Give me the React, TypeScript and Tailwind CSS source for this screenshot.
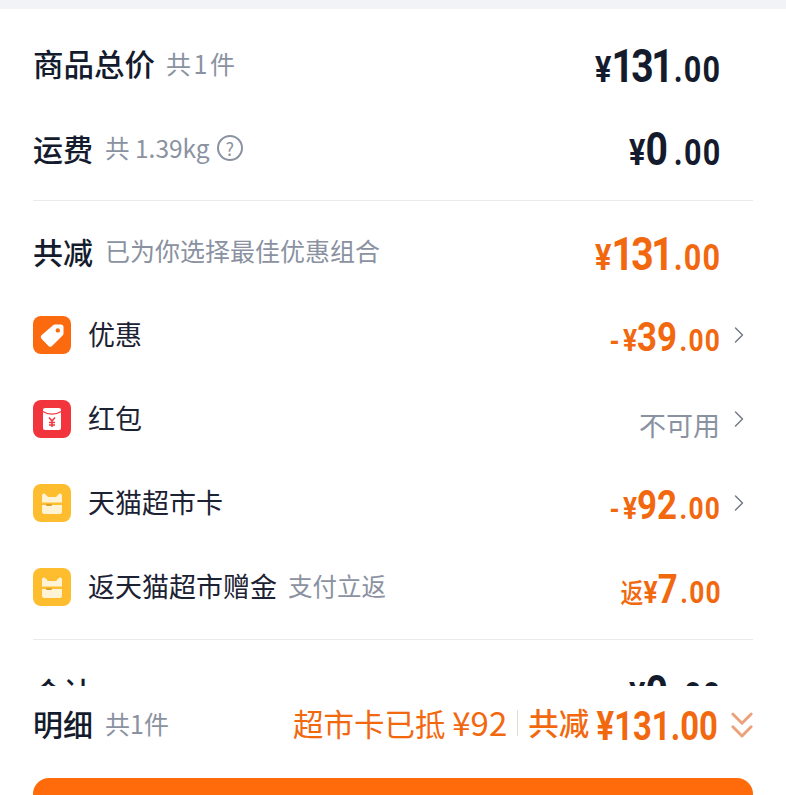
import React from 'react';
import { ChevronRight, ChevronsDown } from 'lucide-react';

const cjk = 'font-["Noto_Sans_CJK_SC","Noto_Sans",sans-serif]';
const num = 'font-["Roboto",sans-serif]';

function Money({ prefix, value, cents = '.00', big = 'text-[46px]', small = 'text-[36px]', color = 'text-[#141b2d]', tight = '' }: {
  prefix?: React.ReactNode;
  value: string;
  cents?: string;
  big?: string;
  small?: string;
  color?: string;
  tight?: string;
}) {
  return (
    <div className={`flex origin-right scale-x-[0.85] items-baseline font-bold leading-none ${num} ${color}`}>
      {prefix}
      <span className={small}>¥</span>
      <span className={`${big} ${tight}`}>{value}</span>
      <span className={`${small} ml-[3px] -mr-[2px] tracking-[1.500px]`}>{cents}</span>
    </div>
  );
}

function TagIcon() {
  return (
    <div className="flex h-[38px] w-[38px] items-center justify-center rounded-lg bg-[#fb6a0e]">
      <svg viewBox="0 0 38 38" className="h-[38px] w-[38px]">
        <path fill="#fff" fillRule="evenodd" d="M22 8.500h6a2.500 2.500 0 0 1 2.500 2.500v6.500a3 3 0 0 1-.9 2.100L19 30a2.500 2.500 0 0 1-3.500 0l-7-7.200a2.500 2.500 0 0 1 0-3.500L19.800 9.400A3 3 0 0 1 22 8.500Zm2.800 3.700a2.200 2.200 0 1 0 0 4.400 2.200 2.200 0 0 0 0-4.400Z" />
      </svg>
    </div>
  );
}

function PacketIcon() {
  return (
    <div className="flex h-[38px] w-[38px] items-center justify-center rounded-lg bg-[#f2353c]">
      <svg viewBox="0 0 38 38" className="h-[38px] w-[38px]">
        <rect x="10" y="8" width="18" height="22" rx="2" fill="#fff" />
        <path d="M10 11.500c5 3.500 13 3.500 18 0" fill="none" stroke="#f2353c" strokeWidth="1.300" />
        <path d="M16 17.500l3 3.500 3-3.500M19 21v6M16 22.500h6M16 25h6" fill="none" stroke="#f2353c" strokeWidth="1.500" />
      </svg>
    </div>
  );
}

function CardIcon() {
  return (
    <div className="flex h-[38px] w-[38px] items-center justify-center rounded-lg bg-[#fdbd2f]">
      <svg viewBox="0 0 38 38" className="h-[38px] w-[38px]">
        <path fill="#fff3d6" d="M9 11.500c0-2 2-2.700 3.200-1.500l2.800 3h8l2.800-3c1.200-1.200 3.200-.5 3.200 1.500V18.500H9Z" />
        <path fill="#fff3d6" d="M9 21h20v6.500a2.500 2.500 0 0 1-2.500 2.500h-15A2.500 2.500 0 0 1 9 27.500Z" />
        <rect x="13" y="20" width="6" height="2" rx="1" fill="#d9a02a" />
      </svg>
    </div>
  );
}

function Row({ icon, label, note, right, arrow }: {
  icon: React.ReactNode;
  label: string;
  note?: string;
  right: React.ReactNode;
  arrow?: boolean;
}) {
  return (
    <div className="flex h-[84px] items-center">
      {icon}
      <span className="ml-[17px] -mt-[1px] text-[27px] text-[#1c2233]">{label}</span>
      {note && <span className="ml-[11px] -mt-[1px] text-[24.500px] text-[#8a92a1]">{note}</span>}
      <div className="ml-auto flex items-center">
        <div className="mt-1">{right}</div>
        <div className="flex w-[33px] justify-end">
          {arrow && <ChevronRight className="h-[28px] w-[28px] text-[#6f7583]" strokeWidth={1.200} />}
        </div>
      </div>
    </div>
  );
}

const orange = 'text-[#f2680f]';
const minus = <span className="mr-[4px] text-[30px]">-</span>;

export default function App() {
  return (
    <div className={`flex h-[795px] w-[786px] flex-col overflow-hidden bg-white ${cjk}`}>
      <div className="h-[9px] shrink-0 bg-[#f1f3f6]" />
      <div className="h-[677px] shrink-0 overflow-hidden px-[33px]">
        <div className="flex h-[112px] items-center pt-[2px]">
          <span className="-mt-[5px] text-[30.500px] font-medium text-[#141b2d]">商品总价</span>
          <span className="ml-[11px] -mt-[5px] text-[25px] text-[#8a92a1] [word-spacing:-3px]">共 1 件</span>
          <div className="ml-auto mr-[33px]"><Money value="131" tight="tracking-[-3px]" /></div>
        </div>
        <div className="flex h-[56px] items-center">
          <span className="-mt-[2px] text-[30px] font-medium text-[#141b2d]">运费</span>
          <span className="ml-[12px] -mt-[2px] text-[24.500px] text-[#8a92a1]">共 1.39kg</span>
          <span className="ml-[7px] -mt-[2px] flex h-[26px] w-[26px] items-center justify-center rounded-full border-2 border-[#8a92a1] text-[18px] leading-none text-[#8a92a1]">?</span>
          <div className="ml-auto mr-[33px]"><Money value="0" tight="mr-[4px]" /></div>
        </div>
        <div className="mt-[23px] h-px bg-[#e9eaee]" />
        <div className="flex h-[103px] items-center">
          <span className="-mt-[3px] text-[30px] font-medium text-[#141b2d]">共减</span>
          <span className="ml-[12px] -mt-[3px] text-[25px] text-[#8a92a1]">已为你选择最佳优惠组合</span>
          <div className="ml-auto mr-[33px] mt-[3px]"><Money value="131" color={orange} tight="tracking-[-3px]" /></div>
        </div>
        <div className="-mt-[11px]">
          <Row icon={<TagIcon />} label="优惠" arrow right={<Money prefix={minus} value="39" big="text-[41px]" small="text-[31px]" color={orange} />} />
          <Row icon={<PacketIcon />} label="红包" arrow right={<span className="mt-[8px] block text-[27px] text-[#8a92a1]">不可用</span>} />
          <Row icon={<CardIcon />} label="天猫超市卡" arrow right={<Money prefix={minus} value="92" big="text-[41px]" small="text-[31px]" color={orange} />} />
          <Row icon={<CardIcon />} label="返天猫超市赠金" note="支付立返" right={<Money prefix={<span className={`text-[27px] font-medium ${cjk}`}>返</span>} value="7" big="text-[41px]" small="text-[31px]" color={orange} />} />
        </div>
        <div className="mt-[10px] h-px bg-[#e9eaee]" />
        <div className="mt-[29px] flex items-center">
          <span className="-mt-[3px] text-[30px] font-medium leading-[44px] text-[#141b2d]">合计</span>
          <div className="ml-auto mr-[33px]"><Money value="0" tight="mr-[4px]" /></div>
        </div>
      </div>
      <div className="flex h-[92px] shrink-0 items-start px-[33px] pt-[15px]">
        <span className="text-[30px] font-medium leading-[44px] text-[#141b2d]">明细</span>
        <span className="ml-[12px] text-[25px] leading-[44px] text-[#8a92a1]">共1件</span>
        <div className={`ml-auto flex h-[44px] items-center ${orange}`}>
          <span className="text-[30.500px]">超市卡已抵 <span className="text-[33px]">¥92</span></span>
          <span className="mx-[10px] h-[26px] w-px bg-[#e5dcd5]" />
          <span className="text-[30.500px] font-medium">共减</span>
          <span className={`-ml-[19px] mt-[8px] origin-right scale-x-[0.82] text-[40px] font-bold ${num}`}>¥131.00</span>
          <ChevronsDown className="-mr-[11px] ml-[2px] mt-[4px] h-[44px] w-[44px] shrink-0 text-[#eba27a]" strokeWidth={1.600} />
        </div>
      </div>
      <div className="h-[60px] shrink-0 px-[33px]">
        <div className="h-[60px] rounded-t-[16px] bg-[#ff6a0a]" />
      </div>
    </div>
  );
}
